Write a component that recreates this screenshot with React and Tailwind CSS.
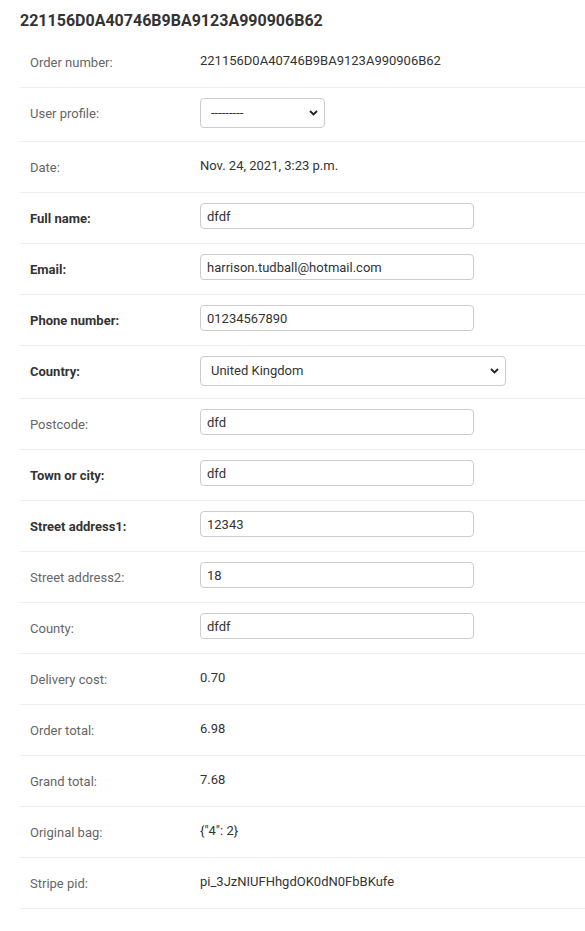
import React from "react";

const rows = [
  { label: "Order number:", kind: "text", value: "221156D0A40746B9BA9123A990906B62" },
  { label: "User profile:", kind: "select", value: "---------", width: "w-[125px]", rowH: "min-h-[54px]" },
  { label: "Date:", kind: "text", value: "Nov. 24, 2021, 3:23 p.m." },
  { label: "Full name:", kind: "input", value: "dfdf", required: true },
  { label: "Email:", kind: "input", value: "harrison.tudball@hotmail.com", required: true },
  { label: "Phone number:", kind: "input", value: "01234567890", required: true },
  { label: "Country:", kind: "select", value: "United Kingdom", width: "w-[306px]", required: true, rowH: "min-h-[53px]" },
  { label: "Postcode:", kind: "input", value: "dfd" },
  { label: "Town or city:", kind: "input", value: "dfd", required: true },
  { label: "Street address1:", kind: "input", value: "12343", required: true },
  { label: "Street address2:", kind: "input", value: "18" },
  { label: "County:", kind: "input", value: "dfdf" },
  { label: "Delivery cost:", kind: "text", value: "0.70" },
  { label: "Order total:", kind: "text", value: "6.98" },
  { label: "Grand total:", kind: "text", value: "7.68" },
  { label: "Original bag:", kind: "text", value: '{"4": 2}' },
  { label: "Stripe pid:", kind: "text", value: "pi_3JzNIUFHhgdOK0dN0FbBKufe" },
];

const Chevron = () => (
  <svg
    className="pointer-events-none absolute right-[7px] top-1/2 -translate-y-1/2"
    width="9"
    height="6"
    viewBox="0 0 9 6"
    fill="none"
  >
    <path d="M1 1l3.5 3.5L8 1" stroke="#222" strokeWidth="1.8" />
  </svg>
);

const Field = ({ row }) => {
  if (row.kind === "text") {
    return <div className="pt-[6px] leading-4 text-[13px] text-[#333]">{row.value}</div>;
  }
  if (row.kind === "select") {
    return (
      <div className={`relative ${row.width}`}>
        <select
          defaultValue={row.value}
          className="h-[30px] w-full appearance-none rounded-[4px] border border-[#ccc] bg-white pl-[10px] pr-6 text-[13px] text-[#333] outline-none"
        >
          <option>{row.value}</option>
        </select>
        <Chevron />
      </div>
    );
  }
  return (
    <input
      type="text"
      defaultValue={row.value}
      className="h-[26px] w-[274px] rounded-[4px] border border-[#ccc] bg-white px-[6px] text-[13px] text-[#333] outline-none"
    />
  );
};

const App = () => {
  return (
    <div className="min-h-[931px] bg-white pt-[11px] font-['Roboto',sans-serif]">
      {/* TITLE */}
      <h2 className="ml-5 h-5 text-[16px] font-bold leading-5 text-[#333]">
        221156D0A40746B9BA9123A990906B62
      </h2>

      {/* FORM ROWS */}
      <div className="ml-5 mt-[6px]">
        {rows.map((row) => (
          <div
            key={row.label}
            className={`flex border-b border-[#eee] px-[10px] py-[10px] ${row.rowH || "min-h-[51px]"}`}
          >
            <div
              className={`w-[170px] shrink-0 pt-[8px] leading-4 text-[13px] ${
                row.required ? "font-bold text-[#333]" : "text-[#666]"
              }`}
            >
              {row.label}
            </div>
            <div className="min-h-[30px]">
              <Field row={row} />
            </div>
          </div>
        ))}
      </div>
    </div>
  );
};

export default App;
